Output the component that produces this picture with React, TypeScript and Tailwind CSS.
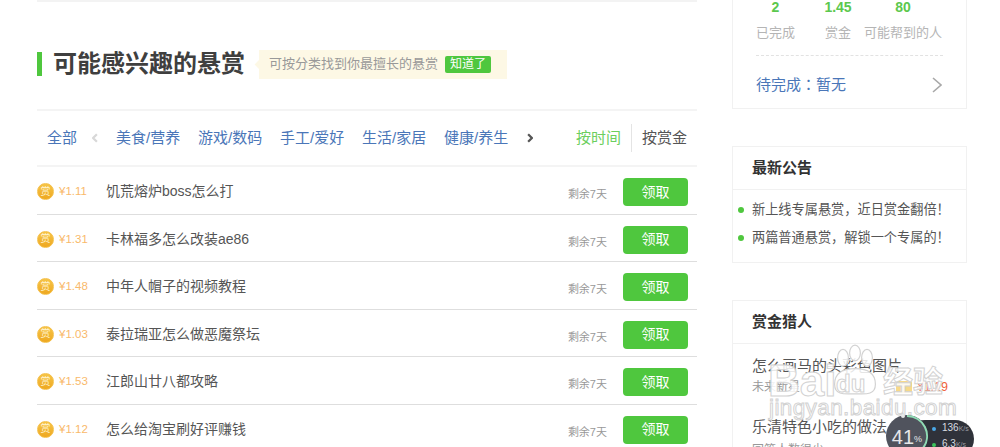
import React from "react";

const FONT = '"Liberation Sans", "Noto Sans CJK SC", sans-serif';

const tasks = [
  ["¥1.11", "饥荒熔炉boss怎么打"],
  ["¥1.31", "卡林福多怎么改装ae86"],
  ["¥1.48", "中年人帽子的视频教程"],
  ["¥1.03", "泰拉瑞亚怎么做恶魔祭坛"],
  ["¥1.53", "江郎山廿八都攻略"],
  ["¥1.12", "怎么给淘宝刷好评赚钱"],
];

const cats = ["美食/营养", "游戏/数码", "手工/爱好", "生活/家居", "健康/养生"];

function Chevron({ className, color, w = 2 }: { className?: string; color: string; w?: number }) {
  return (
    <svg viewBox="0 0 8 12" className={className} fill="none" stroke={color} strokeWidth={w}>
      <path d="M1.5 1 L6.5 6 L1.5 11" />
    </svg>
  );
}

function Coin() {
  return (
    <span className="flex h-[17px] w-[17px] shrink-0 items-center justify-center rounded-full border border-[#f5c04a] bg-linear-to-b from-[#f6c445] to-[#eea81f] text-[10px] leading-none text-[#fff3cf]">
      赏
    </span>
  );
}

function Row({ price, title }: { price: string; title: string }) {
  return (
    <div className="flex h-[47.5px] items-center border-b border-[#dedede] pt-[3px]">
      <Coin />
      <span className="ml-[5px] w-[47px] text-[11.5px] text-[#f9b96a]">{price}</span>
      <span className="text-[14px] text-[#555]">{title}</span>
      <span className="ml-auto mt-[5px] text-[11px] text-[#999]">剩余7天</span>
      <button className="ml-[16px] mr-[9px] mt-[1px] h-[28px] w-[65px] rounded-[4px] bg-[#4fc73e] text-[14px] text-white">
        领取
      </button>
    </div>
  );
}

function Card({ title, children }: { title: string; children: React.ReactNode }) {
  return (
    <div className="border border-[#f1f1f1]">
      <div className="flex h-[43px] items-center border-b border-[#f1f1f1] pl-[19px] pt-[1px] text-[15px] font-bold text-[#333]">
        {title}
      </div>
      {children}
    </div>
  );
}

function Watermark() {
  const stroke = "[-webkit-text-stroke:1px_#d2d2d2]";
  return (
    <div className="pointer-events-none absolute left-[766px] top-[338px] h-[100px] w-[190px]">
      <svg viewBox="0 0 40 44" className="absolute left-[65px] top-[2px] h-[62px] w-[48px]" fill="#ffffffd9" stroke="#d2d2d2">
        <ellipse cx="10" cy="11" rx="4.5" ry="7" />
        <ellipse cx="20" cy="7" rx="4.5" ry="6.5" />
        <ellipse cx="30" cy="11" rx="4.5" ry="7" />
        <path d="M3 33 C3 22 13 20 20 20 C27 20 37 22 37 33 C37 43 27 41 20 41 C13 41 3 43 3 33Z" />
      </svg>
      <span className={`absolute left-[2px] top-[21px] text-[44px] font-bold leading-none text-white/85 ${stroke}`}>Bai</span>
      <span className={`absolute left-[70px] top-[34px] text-[24px] font-bold leading-none text-white/85 ${stroke}`}>du</span>
      <span className={`absolute left-[117px] top-[29px] text-[30px] font-bold leading-none text-white/85 ${stroke}`}>经验</span>
      <span className={`absolute left-[3px] top-[59px] text-[22.5px] leading-none tracking-[0.4px] text-white/80 ${stroke}`}>jingyan.baidu.com</span>
    </div>
  );
}

function SpeedWidget() {
  return (
    <div className="absolute left-[886px] top-[415px] h-[50px] w-[90px]">
      <div className="absolute left-[20px] top-[5px] flex h-[38px] w-[68px] flex-col justify-start gap-[1px] rounded-[19px] bg-[#2f323a] pl-[26px] pt-[1px] text-[10px] leading-[14px] text-[#d9dce0]">
        <div className="flex items-center gap-[6px] whitespace-nowrap">
          <span className="h-[4px] w-[4px] rounded-full bg-[#4aa9e8]" />
          <span>136<span className="text-[7px] text-[#9a9da3]">K/s</span></span>
        </div>
        <div className="flex items-center gap-[6px] whitespace-nowrap">
          <span className="h-[4px] w-[4px] rounded-full bg-[#3bc45a]" />
          <span>6.3<span className="text-[7px] text-[#9a9da3]">K/s</span></span>
        </div>
      </div>
      <div className="absolute left-0 top-0 flex h-[42px] w-[42px] items-center justify-center rounded-full bg-[#50535d] pt-[2px] text-[20px] font-light text-[#e6e7ea]">
        <span>41</span><span className="mt-[6px] text-[9px]">%</span>
      </div>
      <svg viewBox="0 0 42 42" className="absolute left-0 top-0 h-[42px] w-[42px]" fill="none">
        <path d="M21 1 A20 20 0 0 1 37 33" stroke="#8fdcb4" strokeWidth="2" />
      </svg>
      <span className="absolute left-[15px] top-[-1px] h-[4px] w-[4px] rounded-full bg-[#e8e8e8]" />
    </div>
  );
}

export default function App() {
  return (
    <div className="relative h-[447px] w-[1000px] overflow-hidden bg-white" style={{ fontFamily: FONT }}>
      <div className="flex gap-[35px] pl-[37px]">
        <main className="w-[660px] shrink-0">
          <div className="h-[2px] bg-[#f3f3f3]" />
          <div className="mt-[47px] flex h-[30px] items-center">
            <span className="h-[24px] w-[5px] bg-[#4fc73e]" />
            <h2 className="ml-[11px] text-[24px] font-bold leading-none text-[#3f3f3f]">可能感兴趣的悬赏</h2>
            <div className="relative ml-[14px] flex h-[29px] w-[248px] items-center bg-[#fdf8e5] pl-[10px]">
              <span className="absolute left-[-3px] top-[11px] h-[7px] w-[7px] rotate-45 bg-[#fdf8e5]" />
              <span className="text-[13px] text-[#999]">可按分类找到你最擅长的悬赏</span>
              <span className="ml-[7px] flex h-[17px] w-[46px] items-center justify-center rounded-[2px] bg-[#4fc73e] text-[12px] text-white">知道了</span>
            </div>
          </div>
          <div className="mt-[30px] flex h-[58px] items-center border-y-2 border-[#f4f4f4] text-[15px]">
            <span className="ml-[10px] text-[#4a76b8]">全部</span>
            <Chevron className="ml-[15px] h-[10px] w-[6px] rotate-180" color="#d8d8d8" w={3} />
            <div className="ml-[18px] flex gap-[17px] text-[#4a76b8]">
              {cats.map((c) => (
                <span key={c} className="w-[65px] whitespace-nowrap">{c}</span>
              ))}
            </div>
            <Chevron className="ml-[18px] h-[10px] w-[6px]" color="#555" w={3} />
            <span className="ml-[43px] text-[#6ccf5e]">按时间</span>
            <span className="ml-[10px] h-[28px] w-px bg-[#e4e4e4]" />
            <span className="ml-[10px] text-[#555]">按赏金</span>
          </div>
          {tasks.map(([p, t]) => (
            <Row key={t} price={p} title={t} />
          ))}
        </main>

        <aside className="w-[235px] shrink-0">
          <div className="flex h-[109px] flex-col border border-t-0 border-[#f1f1f1] px-[23px]">
            <div className="flex text-[14px] font-bold leading-none text-[#5cc84e]">
              <span className="w-[39px] text-center">2</span>
              <span className="ml-[24px] w-[38px] text-center">1.45</span>
              <span className="ml-[7px] w-[78px] text-center">80</span>
            </div>
            <div className="mt-[10px] flex text-[13px] leading-[18px] text-[#b5b5b5]">
              <span className="w-[39px]">已完成</span>
              <span className="ml-[30px] w-[26px]">赏金</span>
              <span className="ml-[13px] w-[78px] whitespace-nowrap">可能帮到的人</span>
            </div>
            <div className="mt-[13px] border-t border-dashed border-[#e2e2e2]" />
            <div className="mt-[17px] flex items-center justify-between text-[15px] leading-[22px] text-[#4a76b8]">
              <span>待完成<span className="font-['Noto_Sans_CJK_TC']">：</span>暂无</span>
              <svg viewBox="0 0 10 16" className="mr-[1px] h-[16px] w-[10px]" fill="none" stroke="#a8a8a8" strokeWidth="1.6">
                <path d="M1 1 L9 8 L1 15" />
              </svg>
            </div>
          </div>

          <div className="mt-[37px]">
            <Card title="最新公告">
              <ul className="h-[72px] pt-[6px] text-[13.2px] text-[#555]">
                {["新上线专属悬赏，近日赏金翻倍！", "两篇普通悬赏，解锁一个专属的！"].map((s) => (
                  <li key={s} className="flex h-[28px] items-center whitespace-nowrap pl-[5px]">
                    <span className="h-[6px] w-[6px] rounded-full bg-[#4fc73e]" />
                    <span className="ml-[8px]">{s}</span>
                  </li>
                ))}
              </ul>
            </Card>
          </div>

          <div className="mt-[37px]">
            <Card title="赏金猎人">
              <div className="px-[19px] pt-[12px]">
                <div className="text-[15px] leading-[20px] text-[#555]">怎么画马的头彩色图片</div>
                <div className="mt-[2px] flex h-[18px] items-center text-[12px] text-[#999]">
                  <span>未来新星</span>
                  <span className="ml-auto mr-[5px] h-[12px] w-[16px] rounded-[2px] bg-[#f7d98a]" />
                  <span className="mr-[-1px] text-[12.5px] text-[#f0623a]">¥1.19</span>
                </div>
                <div className="mt-[21px] whitespace-nowrap text-[15px] leading-[20px] text-[#555]">乐清特色小吃的做法</div>
                <div className="mt-[4px] text-[12px] text-[#999]">回答人数很少</div>
              </div>
            </Card>
          </div>
        </aside>
      </div>
      <Watermark />
      <SpeedWidget />
    </div>
  );
}
